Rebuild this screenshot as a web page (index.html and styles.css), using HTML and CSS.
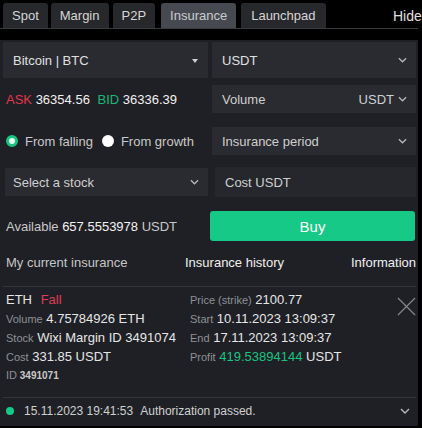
FILE: index.html
```html
<!DOCTYPE html>
<html lang="en">
<head>
  <meta charset="UTF-8">
  <title>Insurance</title>
  <link rel="stylesheet" href="styles.css">
</head>
<body>
  <header class="topbar">
    <nav class="tabs">
      <span class="tab">Spot</span>
      <span class="tab">Margin</span>
      <span class="tab">P2P</span>
      <span class="tab active">Insurance</span>
      <span class="tab">Launchpad</span>
    </nav>
    <span class="hide">Hide</span>
  </header>

  <main class="panel">
    <div class="grid">
      <div class="field">Bitcoin | BTC <span class="caret"></span></div>
      <div class="field">USDT <svg class="chev" viewBox="0 0 10 6"><path d="M1 1l4 4 4-4"/></svg></div>

      <div class="quote">
        <span class="ask">ASK</span> <span class="val">36354.56</span>
        <span class="bid">BID</span> <span class="val">36336.39</span>
      </div>
      <div class="field short">Volume <span class="unit">USDT <svg class="chev" viewBox="0 0 10 6"><path d="M1 1l4 4 4-4"/></svg></span></div>

      <div class="radios">
        <label class="radio"><span class="dot on"></span>From falling</label>
        <label class="radio"><span class="dot"></span>From growth</label>
      </div>
      <div class="field short">Insurance period <svg class="chev" viewBox="0 0 10 6"><path d="M1 1l4 4 4-4"/></svg></div>

      <div class="field stock">Select a stock <svg class="chev" viewBox="0 0 10 6"><path d="M1 1l4 4 4-4"/></svg></div>
      <div class="field cost">Cost USDT</div>

      <div class="avail">Available <span class="val">657.5553978</span> USDT</div>
      <button class="buy">Buy</button>
    </div>

    <div class="subtabs">
      <span class="muted">My current insurance</span>
      <span>Insurance history</span>
      <span class="info">Information</span>
    </div>

    <div class="policy">
      <div class="col left">
        <div class="coin">ETH <span class="fall">Fall</span></div>
        <div><span class="lbl">Volume</span> 4.75784926 ETH</div>
        <div><span class="lbl">Stock</span> Wixi Margin ID 3491074</div>
        <div><span class="lbl">Cost</span> 331.85 USDT</div>
        <div class="id"><span class="lbl">ID</span> <b>3491071</b></div>
      </div>
      <div class="col">
        <div><span class="lbl">Price (strike)</span> 2100.77</div>
        <div><span class="lbl">Start</span> 10.11.2023 13:09:37</div>
        <div><span class="lbl">End</span> 17.11.2023 13:09:37</div>
        <div><span class="lbl">Profit</span> <span class="green">419.53894144</span> USDT</div>
      </div>
      <svg class="close" viewBox="0 0 20 20"><path d="M1 1l18 18M19 1L1 19"/></svg>
    </div>

    <footer class="log">
      <span class="led"></span>
      <span>15.11.2023 19:41:53</span>
      <span>Authorization passed.</span>
      <svg class="chev big" viewBox="0 0 10 6"><path d="M1 1l4 4 4-4"/></svg>
    </footer>
  </main>
</body>
</html>
```

FILE: styles.css
```css
body { margin: 0; background: #000; font-family: "Liberation Sans", Arial, sans-serif; font-size: 13px; color: #e6e6e6; width: 422px; height: 428px; overflow: hidden; }

/* top tab strip */
.topbar { height: 40px; padding-top: 3px; box-sizing: border-box; }
.tabs { display: flex; gap: 4px; padding-left: 3px; border-bottom: 1px solid #3a3b40; width: 415px; height: 25px; }
.tab { background: #27282c; color: #d6d6d6; padding: 0 9px; height: 25px; line-height: 25px; border-radius: 3px 3px 0 0; }
.tab:nth-child(2) { margin-left: -1px; }
.tab.active { background: #46494f; color: #c9ccd2; margin-left: 2px; }
.tab:last-child { padding: 0 10px; margin-left: 1px; }
.hide { position: absolute; top: 8px; left: 393px; font-size: 14px; color: #e0e0e0; }

.panel { background: #1f2025; width: 418px; height: 386px; box-sizing: border-box; padding: 2px 2px 0 3px; display: flex; flex-direction: column; }

/* order form */
.grid { display: grid; grid-template-columns: 205px 204px; column-gap: 4px; grid-template-rows: 36px 42px 42px 40px 48px; align-items: center; }
.field { background: #292b31; height: 36px; display: flex; align-items: center; padding: 0 9px 0 10px; box-sizing: border-box; color: #e0e0e0; }
.field.short { height: 28px; color: #cfcfcf; }
.field .chev { margin-left: auto; }
.caret { margin-left: auto; border: 3px solid transparent; border-top: 4px solid #d0d0d0; margin-top: 4px; margin-right: 1px; }
.chev { width: 9px; height: 6px; fill: none; stroke: #b8b8b8; stroke-width: 1.4; }
.unit { margin-left: auto; display: flex; align-items: center; gap: 4px; }
.unit .chev { margin-left: 0; }
.stock { height: 28px; margin-left: 2px; padding-left: 8px; color: #cfcfcf; }
.cost { height: 30px; margin-left: 3px; background: #25272c; color: #cfcfcf; }

.quote { padding-left: 3px; }
.ask { color: #e2364d; }
.bid { color: #17b67a; margin-left: 4px; }
.val { color: #f2f2f2; }
.radios { display: flex; gap: 9px; padding-left: 3px; color: #c8c8c8; }
.radio { display: flex; align-items: center; gap: 7px; }
.dot { width: 12px; height: 12px; border-radius: 50%; background: #fff; box-sizing: border-box; }
.dot.on { border: 3px solid #19c382; background: #e8fff4; }

.avail { color: #c8c8c8; padding-left: 3px; }
.buy { height: 30px; background: #17c986; color: #fff; border: none; border-radius: 3px; font: 15px "Liberation Sans", Arial, sans-serif; width: 205px; margin-left: -2px; }

/* list header */
.subtabs { display: flex; padding: 4px 0 14px 3px; line-height: 18px; border-bottom: 1px solid #35363b; color: #f0f0f0; }
.subtabs .muted { color: #c6c6c6; width: 179px; }
.subtabs .info { margin-left: auto; }

/* current policy */
.policy { display: flex; position: relative; padding: 3px 0 12px 3px; border-bottom: 1px solid #35363b; }
.col { display: flex; flex-direction: column; color: #e6e6e6; }
.col > div { height: 19px; line-height: 19px; }
.col.left { width: 184px; }
.lbl { color: #8e9096; font-size: 11px; }
.fall { color: #e03a55; margin-left: 5px; }
.id { font-size: 10px; }
.id b { color: #c9c9c9; }
.green { color: #19c382; }
.close { position: absolute; right: 0; top: 10px; width: 19px; height: 19px; stroke: #85878c; stroke-width: 1.3; fill: none; }

/* status line */
.log { display: flex; align-items: center; height: 25px; padding-left: 3px; font-size: 12px; color: #d0d0d0; }
.led { width: 8px; height: 8px; border-radius: 50%; background: #17c986; margin-right: 10px; }
.log span:nth-child(3) { margin-left: 7px; }
.chev.big { margin-left: auto; margin-right: 6px; width: 10px; }
```
